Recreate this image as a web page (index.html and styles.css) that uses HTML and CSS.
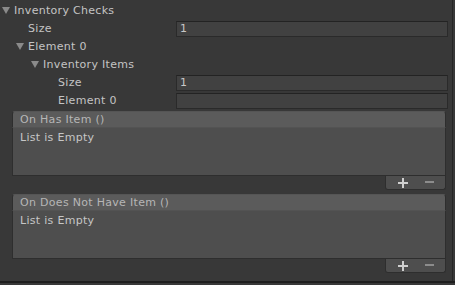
FILE: index.html
```html
<!DOCTYPE html>
<html lang="en">
<head>
  <meta charset="UTF-8">
  <title>Inventory Checks</title>
  <link rel="stylesheet" href="styles.css">
</head>
<body>
  <div class="window">
    <div class="inspector">
      <div class="row">
        <span class="label lvl0"><i class="fold"></i>Inventory Checks</span>
      </div>
      <div class="row">
        <span class="label lvl1">Size</span>
        <div class="field">1</div>
      </div>
      <div class="row">
        <span class="label lvl1 sub"><i class="fold"></i>Element 0</span>
      </div>
      <div class="row">
        <span class="label lvl2"><i class="fold"></i>Inventory Items</span>
      </div>
      <div class="row">
        <span class="label lvl3">Size</span>
        <div class="field">1</div>
      </div>
      <div class="row">
        <span class="label lvl3">Element 0</span>
        <div class="field"></div>
      </div>

      <div class="event">
        <div class="event-head">On Has Item ()</div>
        <div class="event-body">List is Empty</div>
        <div class="event-foot">
          <svg class="plus" width="10" height="10" viewBox="0 0 10 10"><path d="M4 0h2v4h4v2H6v4H4V6H0V4h4z"/></svg>
          <svg class="minus" width="9" height="3" viewBox="0 0 9 3"><path d="M0 0h9v2H0z"/></svg>
        </div>
      </div>

      <div class="event">
        <div class="event-head">On Does Not Have Item ()</div>
        <div class="event-body">List is Empty</div>
        <div class="event-foot">
          <svg class="plus" width="10" height="10" viewBox="0 0 10 10"><path d="M4 0h2v4h4v2H6v4H4V6H0V4h4z"/></svg>
          <svg class="minus" width="9" height="3" viewBox="0 0 9 3"><path d="M0 0h9v2H0z"/></svg>
        </div>
      </div>
    </div>
    <div class="edge"></div>
  </div>
  <div class="bottom"></div>
</body>
</html>
```

FILE: styles.css
```css
body {
  margin: 0;
  background-color: #383838;
  font-family: "DejaVu Sans", "Liberation Sans", sans-serif;
  font-size: 11px;
  letter-spacing: 0.3px;
  color: #c4c4c4;
}
.window {
  display: flex;
  height: 281px;
}
.inspector {
  width: 452px;
  padding-top: 1px;
}
.edge {
  width: 1px;
  background-color: #262626;
}
.bottom {
  height: 2px;
  background-color: #1e1e1e;
}
.row {
  display: grid;
  grid-template-columns: 176px 272px;
  height: 18px;
  align-items: center;
}
.label {
  display: flex;
  align-items: center;
  white-space: nowrap;
}
.lvl0 { padding-left: 2px; }
.lvl1 { padding-left: 28px; }
.lvl1.sub { padding-left: 16px; }
.lvl2 { padding-left: 31px; }
.lvl3 { padding-left: 58px; }
.fold {
  width: 0;
  height: 0;
  border-left: 4px solid transparent;
  border-right: 4px solid transparent;
  border-top: 7px solid #8a8a8a;
  margin-right: 4px;
}
.field {
  height: 14px;
  margin-top: 1px;
  background-color: #414141;
  border: 1px solid #2a2a2a;
  border-top-color: #232323;
  padding-left: 3px;
  line-height: 14px;
  color: #c8c8c8;
}
.event {
  margin: 2px 6px 4px 12px;
  display: flex;
  flex-direction: column;
}
.event-head {
  height: 15px;
  line-height: 15px;
  background-color: #5b5b5b;
  border: 1px solid #2e2e2e;
  border-bottom: none;
  border-top-color: #555;
  border-radius: 3px 3px 0 0;
  padding-left: 7px;
  color: #b6b6b6;
}
.event-body {
  height: 44px;
  background-color: #4e4e4e;
  border: 1px solid #2e2e2e;
  border-top: 1px solid #535353;
  padding: 3px 0 0 7px;
  color: #c6c6c6;
}
.event-foot {
  align-self: flex-end;
  width: 53px;
  height: 13px;
  background-color: #4e4e4e;
  border: 1px solid #2e2e2e;
  border-top: none;
  border-radius: 0 0 3px 3px;
  display: flex;
  align-items: center;
  justify-content: space-around;
  padding: 0 3px;
  box-sizing: content-box;
}
.plus { fill: #cfcfcf; }
.minus { fill: #8c8c8c; }
```
